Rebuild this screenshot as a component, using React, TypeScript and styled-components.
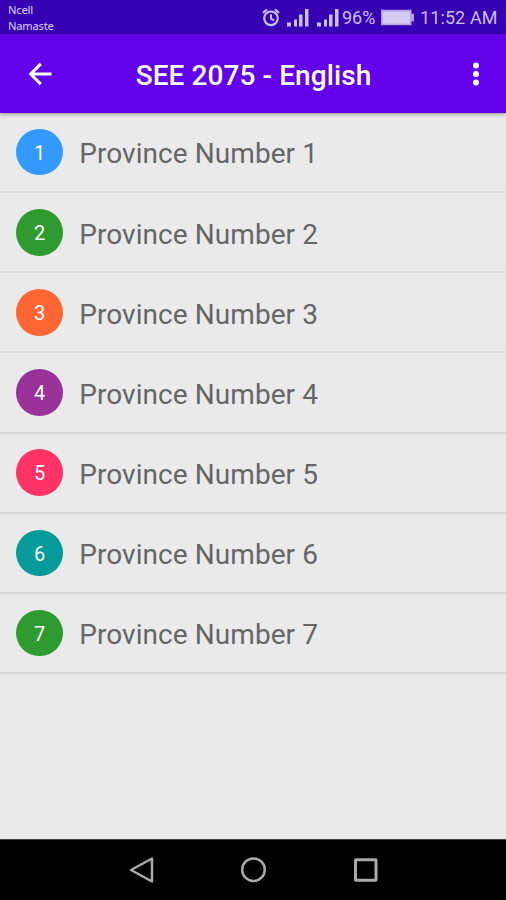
import React from "react";
import styled, { createGlobalStyle } from "styled-components";

const GlobalStyle = createGlobalStyle`
  * { box-sizing: border-box; }
  body { margin: 0; background: #eaeaea; font-family: Roboto, sans-serif; }
`;

const Screen = styled.div`
  display: flex;
  flex-direction: column;
  width: 506px;
  height: 900px;
  overflow: hidden;
  background: #eaeaea;
`;

const StatusBar = styled.header`
  display: flex;
  flex: none;
  justify-content: space-between;
  height: 34px;
  padding: 0 8px 0 8px;
  background: #3600b2;
  color: #cabdf0;
`;

const Carrier = styled.div`
  padding-top: 2px;
  font: 500 11px/16px "Noto Sans", sans-serif;
  letter-spacing: -0.25px;
`;

const Indicators = styled.div`
  display: flex;
  align-items: center;
  height: 36px;
  font-size: 18px;
  line-height: 36px;
  white-space: nowrap;
`;

const StatusIcon = styled.svg<{ $gap: number }>`
  display: block;
  flex: none;
  margin-right: ${(p) => p.$gap}px;
`;

const Percent = styled.span`
  width: 39px;
`;

const Clock = styled.span`
  width: 78px;
  letter-spacing: 0.1px;
`;

const AppBar = styled.nav`
  display: grid;
  flex: none;
  grid-template-columns: 80px 1fr 80px;
  align-items: center;
  height: 79px;
  z-index: 1;
  background: #6200ea;
  color: #fff;
  box-shadow: 0 1px 4px rgba(0, 0, 0, 0.4);
`;

const Title = styled.h1`
  margin: 4px 0 0 1px;
  font-size: 28px;
  line-height: 34px;
  font-weight: 500;
  letter-spacing: 0.08px;
  text-align: center;
  white-space: nowrap;
`;

const IconButton = styled.button<{ $side: "left" | "right" }>`
  display: flex;
  justify-content: ${(p) => (p.$side === "left" ? "flex-start" : "flex-end")};
  padding: ${(p) => (p.$side === "left" ? "0 0 0 24px" : "0 14px 0 0")};
  border: 0;
  background: none;
  color: inherit;
`;

const List = styled.ul`
  flex: 1;
  margin: 0;
  padding: 0;
  list-style: none;
`;

const Row = styled.li`
  display: flex;
  height: 80.15px;
  padding: 15.8px 0 0 16.3px;
  border-bottom: 2px solid #d8d8d8;
`;

const Badge = styled.span<{ $color: string }>`
  width: 46.6px;
  height: 46.6px;
  border-radius: 50%;
  background: ${(p) => p.$color};
  color: #fff;
  font-size: 20px;
  line-height: 49px;
  text-align: center;
`;

const Label = styled.span`
  margin-left: 16.4px;
  padding-top: 8.6px;
  color: #666;
  font-size: 28px;
  line-height: 34px;
  letter-spacing: 0.06px;
`;

const NavBar = styled.footer`
  display: flex;
  flex: none;
  justify-content: center;
  align-items: center;
  gap: 84px;
  height: 61px;
  border-top: 1px solid #444;
  background: #000;
`;

const colors = ["#3399ff", "#2f9a2f", "#ff6633", "#993399", "#ff3366", "#069a9a", "#2f9a2f"];

const Signal = ({ gap }: { gap: number }) => (
  <StatusIcon $gap={gap} width="22" height="20" viewBox="0 0 22 20" fill="currentColor">
    <path d="M0 14.5h4v4H0zM7 11.5h3v7H7zM12 6.5h3.5v12H12zM18 1h3.5v17.5H18z" />
  </StatusIcon>
);

export default function App() {
  return (
    <Screen>
      <GlobalStyle />
      <StatusBar>
        <Carrier>
          <div>Ncell</div>
          <div>Namaste</div>
        </Carrier>
        <Indicators>
          <StatusIcon $gap={7} width="18" height="20" viewBox="0 0 18 20" fill="none" stroke="currentColor">
            <circle cx="9" cy="10.3" r="6.8" strokeWidth="2.2" />
            <path d="M1 4.8 5 1.5M17 4.8 13 1.5" strokeWidth="2.2" />
            <path d="M9 6.3v4.6l3.2 1.5" strokeWidth="2" />
          </StatusIcon>
          <Signal gap={8} />
          <Signal gap={3} />
          <Percent>96%</Percent>
          <StatusIcon $gap={5} width="34" height="18" viewBox="0 0 34 18">
            <path d="M0 0.8h30.5v4H33v7.5h-2.5v4H0z" fill="#b3a0e4" />
            <path d="M1.8 2.6h27v12h-27z" fill="#d6cbf0" />
          </StatusIcon>
          <Clock>11:52 AM</Clock>
        </Indicators>
      </StatusBar>
      <AppBar>
        <IconButton $side="left" aria-label="Back">
          <svg width="32" height="32" viewBox="0 0 32 32" fill="none" stroke="currentColor" strokeWidth="3">
            <path d="M27.5 16H7M16.8 5.9 6.7 16l10.1 10.1" />
          </svg>
        </IconButton>
        <Title>SEE 2075 - English</Title>
        <IconButton $side="right" aria-label="More options">
          <svg width="32" height="32" viewBox="0 0 32 32" fill="currentColor">
            <circle cx="16" cy="7.5" r="3" />
            <circle cx="16" cy="16" r="3" />
            <circle cx="16" cy="24.5" r="3" />
          </svg>
        </IconButton>
      </AppBar>
      <List>
        {colors.map((color, i) => (
          <Row key={i}>
            <Badge $color={color}>{i + 1}</Badge>
            <Label>Province Number {i + 1}</Label>
          </Row>
        ))}
      </List>
      <NavBar>
        <svg width="28" height="28" viewBox="0 0 28 28" fill="none" stroke="#aaa" strokeWidth="2.5">
          <path d="M4 14 25 2.5v23z" strokeLinejoin="round" />
        </svg>
        <svg width="28" height="28" viewBox="0 0 28 28" fill="none" stroke="#aaa" strokeWidth="2.5">
          <circle cx="14.5" cy="13.7" r="11.3" />
        </svg>
        <svg width="28" height="28" viewBox="0 0 28 28" fill="none" stroke="#aaa" strokeWidth="3">
          <rect x="4.5" y="3.7" width="20.5" height="20.5" rx="0.5" />
        </svg>
      </NavBar>
    </Screen>
  );
}
